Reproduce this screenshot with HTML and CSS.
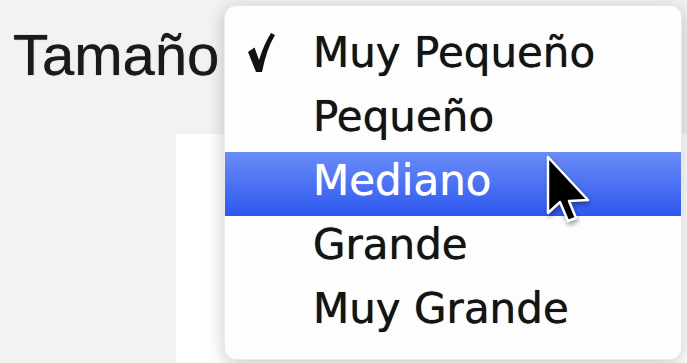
FILE: index.html
```html
<!DOCTYPE html>
<html lang="es">
<head>
    <meta charset="UTF-8">
    <meta name="viewport" content="width=device-width, initial-scale=1.0">
    <title>Tamaño</title>
    <link rel="stylesheet" href="styles.css">
</head>
<body>
    <div class="label">Tamaño</div>
    <div class="panel"></div>

    <ul class="menu">
        <li class="item">
            <span class="mark">
                <svg width="27" height="40" viewBox="0 0 27 40">
                    <path d="M0 19 L6.5 14.5 L11 27 Q16 11 23 0 L27 2 Q18.5 16 14 39 L8 39 Z" fill="#111"/>
                </svg>
            </span>
            <span>Muy Pequeño</span>
        </li>
        <li class="item"><span class="mark"></span><span>Pequeño</span></li>
        <li class="item active"><span class="mark"></span><span>Mediano</span></li>
        <li class="item"><span class="mark"></span><span>Grande</span></li>
        <li class="item"><span class="mark"></span><span>Muy Grande</span></li>
    </ul>

    <svg class="cursor" width="48" height="72" viewBox="0 0 48 72">
        <path d="M3 3 L3 59 L15 48 L23 67 L31 64 L24 47 L43 46 Z" fill="#000" stroke="#fff" stroke-width="2.5" stroke-linejoin="round"/>
    </svg>
</body>
</html>
```

FILE: styles.css
```css
* {
    margin: 0;
    padding: 0;
    box-sizing: border-box;
}

body {
    width: 687px;
    height: 363px;
    overflow: hidden;
    position: relative;
    background: #f2f2f2;
    padding: 22px 0 0 13px;
    font-family: "Liberation Sans", Arial, sans-serif;
}

.label {
    font-size: 58px;
    color: #1a1a1a;
    line-height: 65px;
    text-shadow: 0 0 0.8px #1a1a1a;
}

.panel {
    margin: 47px 0 0 163px;
    height: 229px;
    background: #fff;
}

.menu {
    position: absolute;
    left: 224px;
    top: 5px;
    width: 458px;
    height: 355px;
    list-style: none;
    background: #fdfdfd;
    border: 1px solid rgba(0, 0, 0, 0.08);
    border-radius: 12px;
    box-shadow: 0 4px 18px rgba(0, 0, 0, 0.22);
    padding-top: 18px;
    font-family: "DejaVu Sans", sans-serif;
    font-size: 42px;
    color: #141414;
}

.item {
    display: flex;
    height: 64px;
    line-height: 57px;
    padding-bottom: 7px;
    text-shadow: 0 0 0.8px currentColor;
}

.mark {
    width: 88px;
    flex-shrink: 0;
    padding: 9px 0 0 23px;
    line-height: 0;
}

.item.active {
    background: linear-gradient(#6a8cf7, #2d58ef);
    color: #fff;
}

.cursor {
    position: absolute;
    left: 545px;
    top: 154px;
    filter: drop-shadow(1px 3px 2px rgba(0, 0, 0, 0.35));
}
```
